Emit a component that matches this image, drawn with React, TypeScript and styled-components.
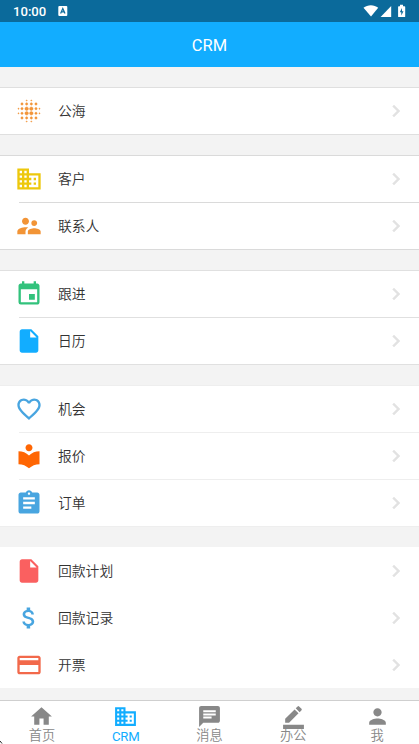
import React, { Fragment } from 'react';
import styled, { createGlobalStyle } from 'styled-components';
import type { IconType } from 'react-icons';
import {
  MdBlurOn,
  MdBusiness,
  MdSupervisorAccount,
  MdEvent,
  MdInsertDriveFile,
  MdFavoriteBorder,
  MdLocalLibrary,
  MdAssignment,
  MdAttachMoney,
  MdPayment,
  MdHome,
  MdChat,
  MdBorderColor,
  MdPerson,
  MdChevronRight,
} from 'react-icons/md';

const GlobalStyle = createGlobalStyle`
  * { box-sizing: border-box; }
  body {
    margin: 0;
    background: #f3f3f3;
    font-family: Roboto, "Noto Sans CJK SC", sans-serif;
    overflow: hidden;
  }
`;

const Screen = styled.div`
  display: flex;
  flex-direction: column;
  width: 100%;
  height: 100vh;
  position: relative;
  overflow: hidden;
`;

const StatusBar = styled.div`
  display: flex;
  flex: none;
  align-items: center;
  height: 22px;
  padding: 0 13px;
  background: #0b6a9b;
  color: #fff;
`;

const Clock = styled.span`
  width: 45px;
  padding-top: 2px;
  font-size: 13.1px;
  font-weight: 500;
  line-height: 20px;
`;

const StatusIcons = styled.div`
  display: flex;
  margin-left: auto;
`;

const Header = styled.header`
  display: flex;
  flex: none;
  align-items: center;
  justify-content: center;
  height: 45px;
  padding-top: 1px;
  background: #12adff;
  color: #fff;
  font-size: 16.5px;
`;

const List = styled.main`
  display: flex;
  flex: 1;
  flex-direction: column;
  gap: 20px;
  padding-top: 20px;
`;

const Group = styled.section<{ $line?: string }>`
  flex: none;
  border: solid ${(p) => p.$line ?? 'transparent'};
  border-width: ${(p) => (p.$line ? '1px 0' : '0')};
  background: #fff;
`;

const Row = styled.div<{ $tall: boolean }>`
  display: flex;
  align-items: center;
  height: ${(p) => (p.$tall ? 47 : 46)}px;
  padding-left: 15px;
  padding-right: 11px;
`;

const Divider = styled.div<{ $line: string }>`
  height: 1px;
  margin-left: 19px;
  background: ${(p) => p.$line};
`;

const RowIcon = styled.span<{ $color: string }>`
  display: flex;
  flex: none;
  width: 43px;
  color: ${(p) => p.$color};
  font-size: 28px;
`;

const BlurIcon = styled(MdBlurOn)`
  path:last-child {
    stroke: currentColor;
    stroke-width: 0.4px;
  }
`;

const RowLabel = styled.span`
  flex: 1;
  color: #333;
  font-size: 13.8px;
  font-weight: 350;
  line-height: 20px;
`;

const Arrow = styled(MdChevronRight)`
  color: #e2e2e2;
  font-size: 24px;

  path:last-child {
    stroke: #e2e2e2;
    stroke-width: 0.5px;
  }
`;

const TabBar = styled.nav`
  display: flex;
  flex: none;
  height: 44px;
  border-top: 1px solid #cfcfcf;
  background: #fff;
`;

const Tab = styled.div<{ $active?: boolean }>`
  display: flex;
  flex: 1;
  flex-direction: column;
  align-items: center;
  padding-top: 3px;
  color: ${(p) => (p.$active ? '#12adff' : '#888')};
  font-size: 25px;

  svg { flex: none; }
`;

const TabLabel = styled.span<{ $latin: boolean }>`
  margin-top: ${(p) => (p.$latin ? -1 : -2)}px;
  font-size: 13.2px;
  font-weight: ${(p) => (p.$latin ? 400 : 350)};
  letter-spacing: ${(p) => (p.$latin ? '-0.3px' : '0')};
  line-height: 17px;
`;

const CornerMark = styled.svg`
  position: absolute;
  left: 0;
  bottom: 0;
`;

type Item = { label: string; icon: IconType | typeof BlurIcon; color: string };

const groups: { line?: string; items: Item[] }[] = [
  { line: '#dfdfdf', items: [{ label: '公海', icon: BlurIcon, color: '#f2953a' }] },
  {
    line: '#dadada',
    items: [
      { label: '客户', icon: MdBusiness, color: '#edc80c' },
      { label: '联系人', icon: MdSupervisorAccount, color: '#f29436' },
    ],
  },
  {
    line: '#e0e0e0',
    items: [
      { label: '跟进', icon: MdEvent, color: '#32c27c' },
      { label: '日历', icon: MdInsertDriveFile, color: '#12adff' },
    ],
  },
  {
    line: '#eeeeee',
    items: [
      { label: '机会', icon: MdFavoriteBorder, color: '#48a5e0' },
      { label: '报价', icon: MdLocalLibrary, color: '#ff6603' },
      { label: '订单', icon: MdAssignment, color: '#48a5e0' },
    ],
  },
  {
    items: [
      { label: '回款计划', icon: MdInsertDriveFile, color: '#fa6060' },
      { label: '回款记录', icon: MdAttachMoney, color: '#48a5e0' },
      { label: '开票', icon: MdPayment, color: '#f2694b' },
    ],
  },
];

const tabs: { label: string; icon: IconType; active?: boolean }[] = [
  { label: '首页', icon: MdHome },
  { label: 'CRM', icon: MdBusiness, active: true },
  { label: '消息', icon: MdChat },
  { label: '办公', icon: MdBorderColor },
  { label: '我', icon: MdPerson },
];

export default function App() {
  return (
    <Screen>
      <GlobalStyle />
      <StatusBar>
        <Clock>10:00</Clock>
        <svg width="10" height="10" viewBox="0 0 10 10">
          <rect x="0.3" y="0" width="9" height="10" rx="1" fill="#fff" />
          <path d="M2.6 7.500 4.800 2.500 7 7.500M3.500 5.900h2.600" fill="none" stroke="#0b6a9b" strokeWidth="1.2" />
        </svg>
        <StatusIcons>
          <svg width="43" height="14" viewBox="0 0 43 14" fill="#fff">
            <path d="M.5 3.800C4.500.4 11.200.4 15.200 3.800L8 12.600z" />
            <path d="M28.200 2V13H17.600z" />
            <path
              fillRule="evenodd"
              d="M37 .8h3v1.500h1.500q.7 0 .7.700v9.400q0 .7-.7.700h-5.700q-.7 0-.7-.7V3q0-.7.700-.7H37zM39 4 36.800 8.300h1.500v3.200L40.500 7.200H39z"
            />
          </svg>
        </StatusIcons>
      </StatusBar>
      <Header>CRM</Header>
      <List>
        {groups.map(({ line, items }) => (
          <Group key={items[0].label} $line={line}>
            {items.map(({ label, icon: Icon, color }, index) => (
              <Fragment key={label}>
                {line && index > 0 && <Divider $line={line} />}
                <Row $tall={!line}>
                  <RowIcon $color={color}>
                    <Icon />
                  </RowIcon>
                  <RowLabel>{label}</RowLabel>
                  <Arrow />
                </Row>
              </Fragment>
            ))}
          </Group>
        ))}
      </List>
      <TabBar>
        {tabs.map(({ label, icon: Icon, active }) => (
          <Tab key={label} $active={active}>
            <Icon />
            <TabLabel $latin={label === 'CRM'}>{label}</TabLabel>
          </Tab>
        ))}
      </TabBar>
      <CornerMark width="3" height="4" viewBox="0 0 3 4">
        <path d="M0 1 2 3.500" stroke="#222" fill="none" />
      </CornerMark>
    </Screen>
  );
}
